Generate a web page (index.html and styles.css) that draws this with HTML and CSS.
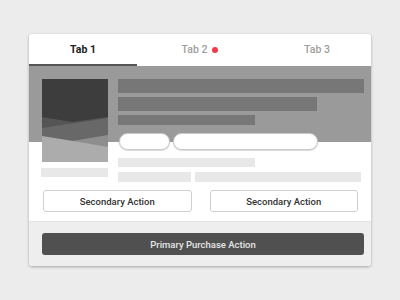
FILE: index.html
```html
<!DOCTYPE html>
<html lang="en">
<head>
  <meta charset="UTF-8">
  <title>Product Card</title>
  <link rel="stylesheet" href="styles.css">
</head>
<body>
  <div class="card">
    <nav class="tabs">
      <div class="tab active">Tab 1</div>
      <div class="tab">Tab 2 <span class="dot"></span></div>
      <div class="tab">Tab 3</div>
    </nav>

    <section class="content">
      <div class="media">
        <svg class="thumb" width="66" height="83" viewBox="0 0 66 83">
          <rect width="66" height="83" fill="#3d3d3d"/>
          <polygon points="0,38 30,43 66,38 66,83 0,83" fill="#555"/>
          <polygon points="0,49 66,39 66,83 0,83" fill="#686868"/>
          <polygon points="30,62 66,56 66,83" fill="#8e8e8e"/>
          <polygon points="0,57 31,62 66,68 66,83 0,83" fill="#acacac"/>
        </svg>
        <div class="caption"></div>
      </div>
      <div class="info">
        <div class="bar bar-1"></div>
        <div class="bar bar-2"></div>
        <div class="bar bar-3"></div>
        <div class="pills">
          <span class="pill pill-short"></span>
          <span class="pill pill-long"></span>
        </div>
        <div class="line line-1"></div>
        <div class="line-row">
          <div class="line line-2"></div>
          <div class="line line-3"></div>
        </div>
      </div>
    </section>

    <div class="actions">
      <button class="btn-secondary">Secondary Action</button>
      <button class="btn-secondary">Secondary Action</button>
    </div>

    <footer class="purchase">
      <button class="btn-primary">Primary Purchase Action</button>
    </footer>
  </div>
</body>
</html>
```

FILE: styles.css
```css
* { box-sizing: border-box; margin: 0; padding: 0; }
body {
  font-family: 'Roboto', 'Liberation Sans', sans-serif;
  background: #ececec;
  padding: 34px 29px;
}

.card {
  width: 342px;
  background: #ffffff;
  border-radius: 3px;
  overflow: hidden;
  box-shadow: 0 1px 3px rgba(0, 0, 0, 0.3);
}

.tabs {
  display: flex;
  justify-content: space-between;
  height: 32px;
}
.tab {
  width: 108px;
  display: flex;
  align-items: center;
  justify-content: center;
  gap: 5px;
  padding-top: 1px;
  font-size: 10.5px;
  font-weight: 500;
  color: #9e9e9e;
  border-bottom: 2px solid transparent;
}
.tab.active {
  color: #222;
  font-weight: 700;
  border-bottom-color: #555;
}
.dot {
  width: 6px;
  height: 6px;
  border-radius: 50%;
  background: #f2394a;
}

.content {
  display: flex;
  gap: 10px;
  padding: 13px 7px 0 13px;
  background: linear-gradient(#9a9a9a 76px, #ffffff 76px);
}
.media {
  width: 66px;
  display: flex;
  flex-direction: column;
}
.thumb { display: block; }
.caption {
  margin-top: 6px;
  margin-left: -1px;
  height: 9px;
  background: #e8e8e8;
}

.info {
  flex: 1;
  display: flex;
  flex-direction: column;
}
.bar { background: #777; }
.bar-1 { height: 14px; }
.bar-2 { height: 14px; width: 199px; margin-top: 4px; }
.bar-3 { height: 10px; width: 137px; margin-top: 4px; }

.pills {
  display: flex;
  gap: 3px;
  margin-top: 8px;
  padding-left: 1px;
}
.pill {
  height: 17px;
  background: #fff;
  border: 1px solid #c8c8c8;
  border-radius: 9px;
  box-shadow: 0 1px 1px rgba(0, 0, 0, 0.15);
}
.pill-short { width: 51px; }
.pill-long { width: 145px; }

.line { background: #e8e8e8; }
.line-1 { height: 9px; width: 137px; margin-top: 8px; }
.line-row {
  display: flex;
  gap: 4px;
  margin-top: 5px;
  padding-right: 3px;
}
.line-2 { height: 10px; width: 73px; }
.line-3 { height: 10px; flex: 1; }

.actions {
  display: flex;
  gap: 18px;
  padding: 8px 13px 9px 14px;
}
.btn-secondary {
  flex: 1;
  height: 22px;
  background: #fff;
  border: 1px solid #cfcfcf;
  border-radius: 3px;
  font-family: inherit;
  font-size: 9.5px;
  font-weight: 500;
  color: #333;
}

.purchase {
  background: #eeeeee;
  padding: 11px 7px 11px 13px;
  border-top: 1px solid #e2e2e2;
}
.btn-primary {
  display: block;
  width: 100%;
  height: 22px;
  background: #505050;
  border: none;
  border-radius: 3px;
  font-family: inherit;
  font-size: 9.5px;
  font-weight: 500;
  color: #e6e6e6;
}
```
